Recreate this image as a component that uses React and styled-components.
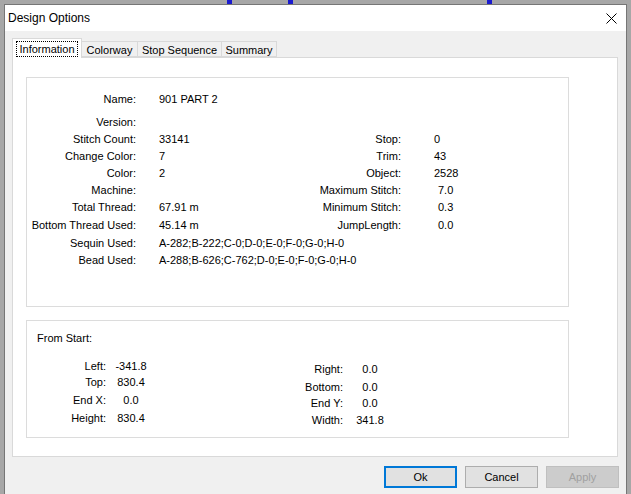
import * as React from "react";
import styled, { createGlobalStyle } from "styled-components";

const GlobalStyle = createGlobalStyle`
  html, body {
    margin: 0;
    padding: 0;
    height: 100%;
    overflow: hidden;
    background: #a7a7a7;
  }
  body {
    font: 11px "Liberation Sans", Arial, sans-serif;
    color: #000;
  }
`;

const mainRows = [
  { label: "Name:", value: "901 PART 2" },
  { label: "Version:", value: "" },
  { label: "Stitch Count:", value: "33141", label2: "Stop:", value2: "0" },
  { label: "Change Color:", value: "7", label2: "Trim:", value2: "43" },
  { label: "Color:", value: "2", label2: "Object:", value2: "2528" },
  { label: "Machine:", value: "", label2: "Maximum Stitch:", value2: "7.0", indent: true },
  { label: "Total Thread:", value: "67.91 m", label2: "Minimum Stitch:", value2: "0.3", indent: true },
  { label: "Bottom Thread Used:", value: "45.14 m", label2: "JumpLength:", value2: "0.0", indent: true },
  { label: "Sequin Used:", value: "A-282;B-222;C-0;D-0;E-0;F-0;G-0;H-0", wide: true },
  { label: "Bead Used:", value: "A-288;B-626;C-762;D-0;E-0;F-0;G-0;H-0", wide: true },
];

const startLeft = [
  ["Left:", "-341.8"],
  ["Top:", "830.4"],
  ["End X:", "0.0"],
  ["Height:", "830.4"],
];

const startRight = [
  ["Right:", "0.0"],
  ["Bottom:", "0.0"],
  ["End Y:", "0.0"],
  ["Width:", "341.8"],
];

const tabs = [
  { name: "Information", width: 70, active: true },
  { name: "Colorway", width: 56 },
  { name: "Stop Sequence", width: 84 },
  { name: "Summary", width: 55 },
];

function CloseIcon() {
  return (
    <svg width="11" height="11" viewBox="0 0 11 11">
      <path d="M0.5 0.5 L10.5 10.5 M10.5 0.5 L0.5 10.5" stroke="#000" strokeWidth="1" fill="none" />
    </svg>
  );
}

export default function App() {
  return (
    <>
      <GlobalStyle />
      <Backdrop>
        <Marker $left={227} />
        <Marker $left={56} />
        <Marker $left={194} />
      </Backdrop>
      <Window>
        <TitleBar>
          <Title>Design Options</Title>
          <CloseButton>
            <CloseIcon />
          </CloseButton>
        </TitleBar>
        <Body>
          <TabRow>
            {tabs.map((t) => (
              <Tab key={t.name} $active={t.active} $width={t.width}>
                {t.active ? <Focus>{t.name}</Focus> : t.name}
              </Tab>
            ))}
          </TabRow>
          <Panel>
            <GroupBox $height={230} $padTop={13}>
              <InfoGrid>
                {mainRows.map((r) => (
                  <React.Fragment key={r.label}>
                    <Label>{r.label}</Label>
                    {r.wide ? (
                      <WideValue>{r.value}</WideValue>
                    ) : (
                      <>
                        <Value>{r.value}</Value>
                        <Label>{r.label2 || ""}</Label>
                        <Value2 $indent={r.indent}>{r.value2 || ""}</Value2>
                      </>
                    )}
                  </React.Fragment>
                ))}
              </InfoGrid>
            </GroupBox>
            <GroupBox $height={118} $padTop={9}>
              <BoxTitle>From Start:</BoxTitle>
              <StartRow>
                <StartGrid $labelWidth={79} $valueWidth={50} $rows="16px 18px 18px 17px">
                  {startLeft.map(([l, v]) => (
                    <React.Fragment key={l}>
                      <Label>{l}</Label>
                      <CenterValue>{v}</CenterValue>
                    </React.Fragment>
                  ))}
                </StartGrid>
                <StartGrid
                  $labelWidth={100}
                  $valueWidth={54}
                  $rows="18px 16px 17px 17px"
                  $offset={3}
                >
                  {startRight.map(([l, v]) => (
                    <React.Fragment key={l}>
                      <Label>{l}</Label>
                      <CenterValue>{v}</CenterValue>
                    </React.Fragment>
                  ))}
                </StartGrid>
              </StartRow>
            </GroupBox>
          </Panel>
          <ButtonRow>
            <Button $primary>Ok</Button>
            <Button>Cancel</Button>
            <Button $disabled>Apply</Button>
          </ButtonRow>
        </Body>
      </Window>
    </>
  );
}

const Backdrop = styled.div`
  height: 4px;
  display: flex;
  align-items: flex-start;
`;

const Marker = styled.span`
  width: 5px;
  height: 4px;
  margin-left: ${(p) => p.$left}px;
  background: #1a1ad0;
  flex: none;
`;

const Window = styled.div`
  margin-left: 4px;
  width: 621px;
  height: 489px;
  border: 1px solid #767676;
  border-bottom: none;
  background: #f0f0f0;
  display: flex;
  flex-direction: column;
  overflow: hidden;
`;

const TitleBar = styled.div`
  height: 26px;
  background: #fff;
  display: flex;
  align-items: center;
  justify-content: space-between;
  padding: 0 9px 0 3px;
  flex: none;
`;

const Title = styled.div`
  font: 12px "Liberation Sans", Arial, sans-serif;
  color: #000;
`;

const CloseButton = styled.div`
  width: 11px;
  height: 11px;
  display: flex;
`;

const Body = styled.div`
  padding: 7px 8px 0 7px;
  display: flex;
  flex-direction: column;
`;

const TabRow = styled.div`
  display: flex;
  align-items: flex-end;
  height: 19px;
  position: relative;
  z-index: 1;
`;

const Tab = styled.div`
  box-sizing: border-box;
  width: ${(p) => p.$width}px;
  height: ${(p) => (p.$active ? 20 : 16)}px;
  margin-bottom: ${(p) => (p.$active ? -1 : 0)}px;
  border: 1px solid #d9d9d9;
  border-bottom: ${(p) => (p.$active ? "none" : "1px solid #d9d9d9")};
  border-left: ${(p) => (p.$active ? "1px solid #d9d9d9" : "none")};
  background: ${(p) => (p.$active ? "#fff" : "#f0f0f0")};
  display: flex;
  align-items: center;
  justify-content: center;
  padding-top: 1px;
  color: #000;
  white-space: nowrap;
`;

const Focus = styled.span`
  border: 1px dotted #000;
  padding: 1px 2px;
  line-height: 12px;
`;

const Panel = styled.div`
  box-sizing: border-box;
  width: 606px;
  height: 400px;
  background: #fff;
  border: 1px solid #d9d9d9;
  padding: 19px 0 0 13px;
  display: flex;
  flex-direction: column;
  gap: 13px;
  flex: none;
`;

const GroupBox = styled.div`
  box-sizing: border-box;
  width: 543px;
  height: ${(p) => p.$height}px;
  border: 1px solid #dcdcdc;
  padding: ${(p) => p.$padTop ?? 12}px 0 0 0;
  flex: none;
`;

const InfoGrid = styled.div`
  display: grid;
  grid-template-columns: 109px 165px 100px 1fr;
  grid-template-rows: 23px 17px 17px 17px 17px 17px 18px 18px 17px 17px;
  align-items: start;
  line-height: 17px;
  white-space: nowrap;
`;

const Label = styled.div`
  text-align: right;
  color: #000;
`;

const Value = styled.div`
  padding-left: 23px;
`;

const Value2 = styled.div`
  padding-left: ${(p) => (p.$indent ? 37 : 33)}px;
`;

const WideValue = styled.div`
  grid-column: 2 / span 3;
  padding-left: 23px;
`;

const BoxTitle = styled.div`
  line-height: 17px;
  padding-left: 10px;
`;

const StartRow = styled.div`
  display: flex;
  gap: 87px;
  margin-top: 11px;
`;

const StartGrid = styled.div`
  display: grid;
  grid-template-columns: ${(p) => p.$labelWidth}px ${(p) => p.$valueWidth}px;
  grid-template-rows: ${(p) => p.$rows};
  align-items: start;
  line-height: 17px;
  margin-top: ${(p) => p.$offset || 0}px;
  white-space: nowrap;
`;

const CenterValue = styled.div`
  text-align: center;
`;

const ButtonRow = styled.div`
  display: flex;
  justify-content: flex-end;
  gap: 8px;
  padding: 9px 0 0 0;
  margin-right: -1px;
`;

const Button = styled.div`
  box-sizing: border-box;
  width: 73px;
  height: 22px;
  display: flex;
  align-items: center;
  justify-content: center;
  background: ${(p) => (p.$disabled ? "#cccccc" : "#e1e1e1")};
  border: ${(p) =>
    p.$primary ? "2px solid #0078d7" : p.$disabled ? "1px solid #bfbfbf" : "1px solid #adadad"};
  color: ${(p) => (p.$disabled ? "#a0a0a0" : "#000")};
`;
